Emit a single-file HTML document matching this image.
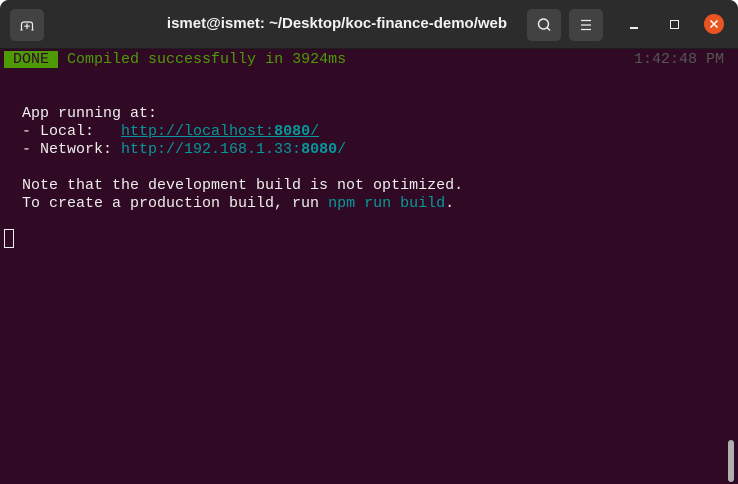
<!DOCTYPE html>
<html><head><meta charset="utf-8"><style>
html,body{margin:0;padding:0;background:#fff;}
body{width:738px;height:484px;overflow:hidden;position:relative;}
.win{position:absolute;left:0;top:0;width:738px;height:484px;background:#300a24;border-radius:9px 9px 0 0;overflow:hidden;}
.tb{position:absolute;left:0;top:0;width:738px;height:49px;background:#2c2c2c;border-bottom:1px solid #1e1e1e;box-sizing:border-box;}
.btn{position:absolute;top:9px;width:34px;height:32px;background:#424242;border-radius:5px;}
.title{position:absolute;left:0;width:674px;top:15px;text-align:center;font:bold 15px "Liberation Sans",sans-serif;color:#f2f2f2;}
.term{position:absolute;left:4px;top:51px;font:15px/18px "Liberation Mono",monospace;color:#eeeeec;white-space:pre;}
.g{color:#4e9a06}.c{color:#06989a}.b{font-weight:bold}
.done{background:#4e9a06;color:#300a24}
.time{position:absolute;right:14px;top:51px;font:15px/18px "Liberation Mono",monospace;color:#555;}
.cur{position:absolute;left:4px;top:229px;width:8px;height:17px;border:1px solid #eee;}
.sb{position:absolute;left:728px;top:440px;width:6px;height:42px;background:#b0b0b0;border-radius:3px;}
</style></head><body>
<div class="win">
<div class="tb">
 <div class="btn" style="left:10px"><svg width="34" height="32" viewBox="0 0 34 32"><path d="M11.5 21V15.5Q11.5 13 14 13H20Q22.5 13 22.5 15.5V21" fill="none" stroke="#eee" stroke-width="1.2"/><path d="M17 14.5V20M14.3 17.2H19.7" stroke="#eee" stroke-width="1.2"/><path d="M10.5 21H12.5M21.5 21H23.5" stroke="#eee" stroke-width="1.2"/></svg></div>
 <div class="title">ismet@ismet: ~/Desktop/koc-finance-demo/web</div>
 <div class="btn" style="left:527px"><svg width="34" height="32" viewBox="0 0 34 32"><circle cx="16.5" cy="15" r="5" fill="none" stroke="#eee" stroke-width="1.4"/><path d="M20 18.5L23 21.5" stroke="#eee" stroke-width="1.5"/></svg></div>
 <div class="btn" style="left:569px"><svg width="34" height="32" viewBox="0 0 34 32"><path d="M12 11.5H22M12 16H22M12 20.5H22" stroke="#eee" stroke-width="1.2"/></svg></div>
 <div style="position:absolute;left:630px;top:27px;width:8px;height:1.5px;background:#eee"></div>
 <div style="position:absolute;left:670px;top:20px;width:7px;height:7px;border:1.3px solid #eee"></div>
 <div style="position:absolute;left:704px;top:14px;width:20px;height:20px;border-radius:50%;background:#e95420"><svg width="20" height="20"><path d="M6.5 6.5L13.5 13.5M13.5 6.5L6.5 13.5" stroke="#fff" stroke-width="1.5"/></svg></div>
</div>
<div class="term"><span class="done"> DONE </span> <span class="g">Compiled successfully in 3924ms</span>


  App running at:
  - Local:   <span class="c" style="text-decoration:underline">http://localhost:<span class="b">8080</span>/</span>
  - Network: <span class="c">http://192.168.1.33:<span class="b">8080</span>/</span>

  Note that the development build is not optimized.
  To create a production build, run <span class="c">npm run build</span>.</div>
<div class="time">1:42:48 PM</div>
<div class="cur"></div>
<div class="sb"></div>
</div>
</body></html>
